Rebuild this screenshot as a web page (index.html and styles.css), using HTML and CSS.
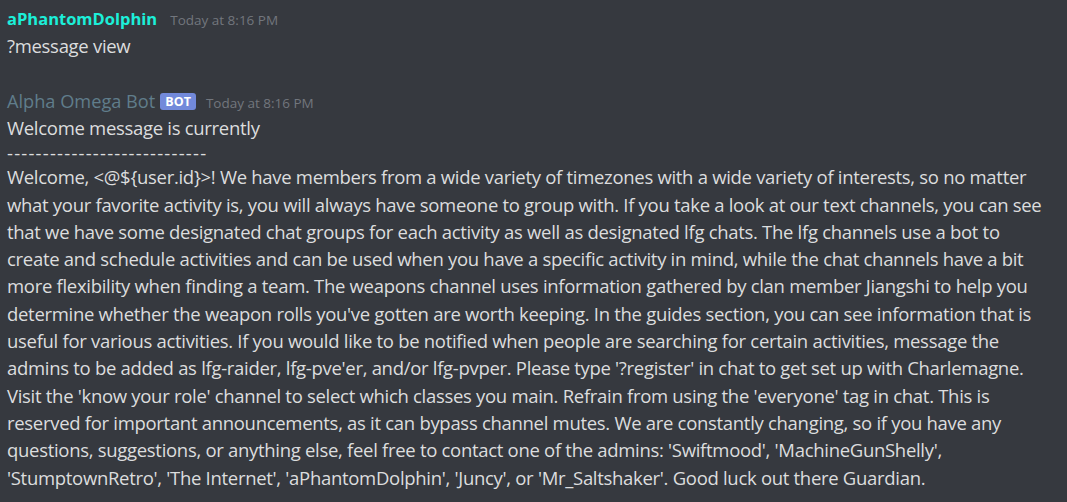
FILE: index.html
```html
<!DOCTYPE html>
<html>
<head>
<meta charset="utf-8">
<link rel="stylesheet" href="styles.css">
</head>
<body>
<div class="chat">
  <div class="message">
    <div class="header">
      <span class="name dolphin">aPhantomDolphin</span>
      <span class="time">Today at 8:16 PM</span>
    </div>
    <div class="content">?message view</div>
  </div>
  <div class="message">
    <div class="header">
      <span class="name bot">Alpha Omega Bot</span>
      <span class="tag">BOT</span>
      <span class="time">Today at 8:16 PM</span>
    </div>
    <div class="content">
      <div class="line">Welcome message is currently</div>
      <div class="line dashes">----------------------------</div>
      <div class="para">Welcome, &lt;@${user.id}&gt;! We have members from a wide variety of timezones with a wide variety of interests, so no matter<br>what your favorite activity is, you will always have someone to group with. If you take a look at our text channels, you can see<br>that we have some designated chat groups for each activity as well as designated lfg chats. The lfg channels use a bot to<br>create and schedule activities and can be used when you have a specific activity in mind, while the chat channels have a bit<br>more flexibility when finding a team. The weapons channel uses information gathered by clan member Jiangshi to help you<br>determine whether the weapon rolls you've gotten are worth keeping. In the guides section, you can see information that is<br>useful for various activities. If you would like to be notified when people are searching for certain activities, message the<br>admins to be added as lfg-raider, lfg-pve'er, and/or lfg-pvper. Please type '?register' in chat to get set up with Charlemagne.<br>Visit the 'know your role' channel to select which classes you main. Refrain from using the 'everyone' tag in chat. This is<br>reserved for important announcements, as it can bypass channel mutes. We are constantly changing, so if you have any<br>questions, suggestions, or anything else, feel free to contact one of the admins: 'Swiftmood', 'MachineGunShelly',<br>'StumptownRetro', 'The Internet', 'aPhantomDolphin', 'Juncy', or 'Mr_Saltshaker'. Good luck out there Guardian.</div>
    </div>
  </div>
</div>
</body>
</html>
```
FILE: styles.css
```css
html, body {
  margin: 0;
  padding: 0;
  background: #36393f;
  height: 100%;
  overflow: hidden;
}
.chat {
  padding: 8px 7px 0 7px;
  font-family: "Open Sans", "Noto Sans", sans-serif;
  color: #dcddde;
  font-size: 18.5px;
  letter-spacing: -0.3px;
}
.message + .message {
  margin-top: 31px;
}
.header {
  display: flex;
  align-items: baseline;
  height: 22px;
  line-height: 22px;
  letter-spacing: 0;
}
.name {
  font-size: 16.5px;
}
.dolphin {
  color: #1cefd9;
  font-weight: 700;
}
.bot {
  color: #607d8b;
  font-size: 18.2px;
  font-weight: 500;
}
.tag {
  align-self: center;
  margin-left: 5px;
  background: #7289da;
  color: #ffffff;
  font-size: 12.5px;
  font-weight: 700;
  border-radius: 3px;
  padding: 0 5px;
  height: 17px;
  line-height: 17px;
}
.time {
  margin-left: 13px;
  color: #72767d;
  font-size: 13.5px;
}
.tag + .time {
  margin-left: 10px;
}
.content {
  line-height: 27.3px;
  margin-top: 2px;
}
.dashes {
  line-height: 21.7px;
  letter-spacing: 1.2px;
}
.para {
  white-space: nowrap;
}
```
